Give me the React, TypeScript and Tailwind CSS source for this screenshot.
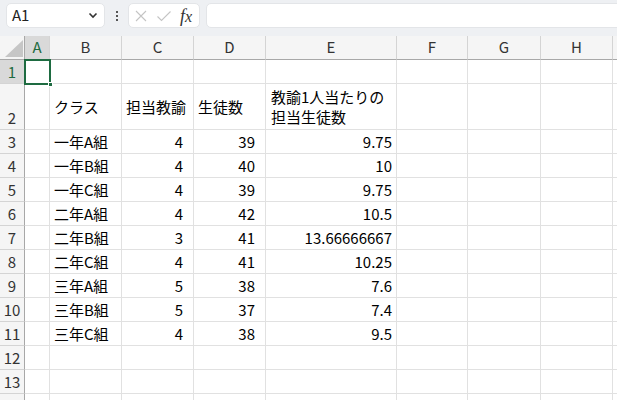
import React from "react";

const cols = [
  { name: "A", w: 25 },
  { name: "B", w: 72 },
  { name: "C", w: 72 },
  { name: "D", w: 72 },
  { name: "E", w: 131 },
  { name: "F", w: 71 },
  { name: "G", w: 73 },
  { name: "H", w: 72 },
  { name: "", w: 40 },
];

type Row = { n: number; h: number; b?: string; c?: string; d?: string; e?: string };

const rows: Row[] = [
  { n: 1, h: 24 },
  { n: 2, h: 46, b: "クラス", c: "担当教諭", d: "生徒数", e: "教諭1人当たりの\n担当生徒数" },
  { n: 3, h: 24, b: "一年A組", c: "4", d: "39", e: "9.75" },
  { n: 4, h: 24, b: "一年B組", c: "4", d: "40", e: "10" },
  { n: 5, h: 24, b: "一年C組", c: "4", d: "39", e: "9.75" },
  { n: 6, h: 24, b: "二年A組", c: "4", d: "42", e: "10.5" },
  { n: 7, h: 24, b: "二年B組", c: "3", d: "41", e: "13.66666667" },
  { n: 8, h: 24, b: "二年C組", c: "4", d: "41", e: "10.25" },
  { n: 9, h: 24, b: "三年A組", c: "5", d: "38", e: "7.6" },
  { n: 10, h: 24, b: "三年B組", c: "5", d: "37", e: "7.4" },
  { n: 11, h: 24, b: "三年C組", c: "4", d: "38", e: "9.5" },
  { n: 12, h: 24 },
  { n: 13, h: 24 },
  { n: 14, h: 24 },
];

function Toolbar() {
  return (
    <div className="flex h-[36px] items-start bg-[#eef0f3] pt-[3px]">
      <div className="ml-[6px] flex h-[25px] w-[99px] items-center justify-between rounded-[5px] border border-[#e3e5e8] bg-white pl-[5px] pr-[6px] text-[15px] text-[#222]">
        <span>A1</span>
        <svg width="10" height="7" viewBox="0 0 10 7">
          <path d="M1.5 1.5 L5 5 L8.5 1.5" fill="none" stroke="#333" strokeWidth="1.6" />
        </svg>
      </div>
      <div className="flex h-[25px] w-[23px] flex-col items-center justify-center gap-[2px]">
        <div className="h-[2px] w-[2px] bg-[#555]" />
        <div className="h-[2px] w-[2px] bg-[#555]" />
        <div className="h-[2px] w-[2px] bg-[#555]" />
      </div>
      <div className="flex h-[25px] w-[72px] items-center rounded-[5px] border border-[#e3e5e8] bg-white">
        <svg className="ml-[5px]" width="14" height="14" viewBox="0 0 14 14">
          <path d="M2 2 L12 12 M12 2 L2 12" stroke="#c4c4c4" strokeWidth="1.1" />
        </svg>
        <svg className="ml-[8px]" width="16" height="14" viewBox="0 0 16 14">
          <path d="M1.5 7.5 L5.5 11.5 L14.5 2.5" fill="none" stroke="#c4c4c4" strokeWidth="1.1" />
        </svg>
        <span className="ml-[8px] font-['Liberation_Serif',serif] text-[18px] italic leading-none text-[#333]">
          f<span className="text-[16px]">x</span>
        </span>
      </div>
      <div className="-mr-[8px] ml-[6px] h-[25px] flex-1 rounded-[5px] border border-[#e3e5e8] bg-white" />
    </div>
  );
}

function Cell({ w, h, text, align }: { w: number; h: number; text?: string; align: "left" | "right" | "rightE" }) {
  const cls =
    align === "left"
      ? "justify-start pl-[4px]"
      : align === "right"
      ? "justify-end pr-[10px]"
      : "justify-end pr-[4px]";
  const multi = text && text.includes("\n");
  return (
    <div
      className={`flex shrink-0 items-center border-b border-r border-[#e1e1e1] bg-white ${multi ? "justify-start pl-[5px]" : cls}`}
      style={{ width: w, height: h }}
    >
      {text && (
        <span className="whitespace-pre leading-[20px] text-black">{text}</span>
      )}
    </div>
  );
}

export default function App() {
  return (
    <div className="relative h-[400px] w-[617px] overflow-hidden bg-white font-['Noto_Sans_CJK_JP','Noto_Sans',sans-serif] text-[15px]">
      <Toolbar />
      <div className="flex h-[24px] bg-[#f5f5f5]">
        <div className="relative h-[24px] w-[25px] shrink-0 border-b border-r border-[#a8a8a8]">
          <svg className="absolute bottom-[2px] right-[1px]" width="18" height="17" viewBox="0 0 18 17">
            <path d="M18 0 L18 17 L0 17 Z" fill="#c6c6c6" />
          </svg>
        </div>
        {cols.map((c) => (
          <div
            key={c.name + c.w}
            className={`flex shrink-0 items-center justify-center border-b border-r border-b-[#a8a8a8] border-r-[#d4d4d4] ${
              c.name === "A" ? "bg-[#d9d9d9] text-[#1e6b41]" : "text-[#333]"
            }`}
            style={{ width: c.w }}
          >
            {c.name}
          </div>
        ))}
      </div>
      {rows.map((r) => (
        <div key={r.n} className="flex">
          <div
            className={`flex w-[25px] shrink-0 items-end justify-center border-b border-r border-b-[#d4d4d4] border-r-[#a8a8a8] leading-[23px] ${
              r.n === 1 ? "bg-[#d9d9d9] text-[#1e6b41]" : "bg-[#f5f5f5] text-[#333]"
            }`}
            style={{ height: r.h }}
          >
            {r.n < 14 ? r.n : ""}
          </div>
          <Cell w={25} h={r.h} align="left" />
          <Cell w={72} h={r.h} text={r.b} align="left" />
          <Cell w={72} h={r.h} text={r.c} align={r.n === 2 ? "left" : "right"} />
          <Cell w={72} h={r.h} text={r.d} align={r.n === 2 ? "left" : "right"} />
          <Cell w={131} h={r.h} text={r.e} align="rightE" />
          <Cell w={71} h={r.h} align="left" />
          <Cell w={73} h={r.h} align="left" />
          <Cell w={72} h={r.h} align="left" />
          <Cell w={40} h={r.h} align="left" />
        </div>
      ))}
      <div className="absolute left-[24px] top-[59px] h-[26px] w-[27px] border-2 border-[#1e6b41]" />
      <div className="absolute left-[48px] top-[82px] h-[5px] w-[5px] border border-white bg-[#1e6b41]" />
    </div>
  );
}
